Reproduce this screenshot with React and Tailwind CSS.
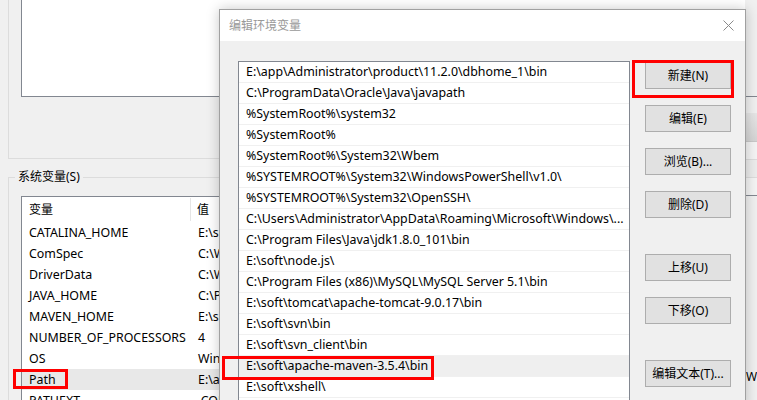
import React from "react";

const font = { fontFamily: '"Noto Sans", "Noto Sans CJK SC", sans-serif' };

const paths = [
  "E:\\app\\Administrator\\product\\11.2.0\\dbhome_1\\bin",
  "C:\\ProgramData\\Oracle\\Java\\javapath",
  "%SystemRoot%\\system32",
  "%SystemRoot%",
  "%SystemRoot%\\System32\\Wbem",
  "%SYSTEMROOT%\\System32\\WindowsPowerShell\\v1.0\\",
  "%SYSTEMROOT%\\System32\\OpenSSH\\",
  "C:\\Users\\Administrator\\AppData\\Roaming\\Microsoft\\Windows\\...",
  "C:\\Program Files\\Java\\jdk1.8.0_101\\bin",
  "E:\\soft\\node.js\\",
  "C:\\Program Files (x86)\\MySQL\\MySQL Server 5.1\\bin",
  "E:\\soft\\tomcat\\apache-tomcat-9.0.17\\bin",
  "E:\\soft\\svn\\bin",
  "E:\\soft\\svn_client\\bin",
  "E:\\soft\\apache-maven-3.5.4\\bin",
  "E:\\soft\\xshell\\",
];

const sysVars = [
  ["CATALINA_HOME", "E:\\soft\\tomcat"],
  ["ComSpec", "C:\\Windows\\system32\\cmd.exe"],
  ["DriverData", "C:\\Windows\\System32\\Drivers"],
  ["JAVA_HOME", "C:\\Program Files\\Java"],
  ["MAVEN_HOME", "E:\\soft\\apache-maven"],
  ["NUMBER_OF_PROCESSORS", "4"],
  ["OS", "Windows_NT"],
  ["Path", "E:\\app\\Administrator"],
  ["PATHEXT", ".COM;.EXE;.BAT"],
];

const Btn = ({ label, className = "" }) => (
  <div
    className={`w-[86px] h-[27px] shrink-0 flex items-center justify-center bg-[#e1e1e1] border border-[#adadad] text-[12px] leading-[16px] text-black ${className}`}
  >
    {label}
  </div>
);

export default function App() {
  return (
    <div
      className="relative w-[757px] h-[400px] overflow-hidden bg-[#f0f0f0] flex"
      style={font}
    >
      {/* background window */}
      <div className="w-[745px] shrink-0 flex flex-col">
        <div className="ml-2 h-[159px] shrink-0 border-l border-b border-[#dcdcdc] pl-3">
          <div className="h-[97px] bg-white border-l border-b border-[#828790]" />
        </div>
        <div className="relative mt-[18px] ml-2 flex-1 min-h-0 border-l border-t border-[#dcdcdc] pl-3 pt-[18px]">
          <span className="absolute left-[6px] top-[-10px] px-[3px] bg-[#f0f0f0] text-[12px] leading-[18px] text-black">
            系统变量(S)
          </span>
          <div className="h-full bg-white border-l border-t border-[#828790] overflow-hidden">
            <div className="h-[25px] flex items-center text-[12px] leading-[16px] text-black">
              <div className="w-[169px] pl-[7px] h-[23px] flex items-center border-r border-[#e5e5e5]">
                变量
              </div>
              <div className="pl-[6px]">值</div>
            </div>
            {sysVars.map(([k, v]) => (
              <div
                key={k}
                className={`h-[21px] shrink-0 flex items-center text-[12.4px] leading-[16px] text-black ${
                  k === "Path" ? "bg-[#e8e8e8]" : ""
                }`}
              >
                <div className="w-[169px] pl-[7px] whitespace-nowrap">{k}</div>
                <div className="pl-[7px] whitespace-nowrap">{v}</div>
              </div>
            ))}
          </div>
        </div>
      </div>

      {/* sliver of the window behind, right edge */}
      <div className="w-[12px] shrink-0 flex flex-col overflow-hidden">
        <div className="h-[96px] shrink-0" />
        <div className="h-[1px] shrink-0 bg-[#828790]" />
        <div className="h-[16px] shrink-0" />
        <div className="h-[28px] shrink-0 bg-gradient-to-b from-[#e6e6e6] to-[#d4d4d4]" />
        <div className="h-[1px] shrink-0 bg-[#c8c8c8]" />
        <div className="h-[17px] shrink-0 bg-[#f4f4f4]" />
        <div className="h-[1px] shrink-0 bg-[#dcdcdc]" />
        <div className="h-[17px] shrink-0 bg-[#ececec]" />
        <div className="h-[1px] shrink-0 bg-[#dcdcdc]" />
        <div className="h-[17px] shrink-0 bg-[#f4f4f4]" />
        <div className="h-[1px] shrink-0 bg-[#828790]" />
        <div className="flex-1 flex flex-col justify-end pb-[14px]">
          <span className="text-[12px] text-black leading-[18px] pl-[1px]">Wi</span>
        </div>
      </div>

      {/* edit env var dialog */}
      <div className="absolute left-[219px] top-[9px] w-[527px] h-[400px] border border-[#a0a0a0] bg-[#f0f0f0] shadow-[0_0_12px_rgba(0,0,0,0.22)] flex flex-col">
        <div className="h-[31px] shrink-0 bg-white flex items-center justify-between pl-[9px] pr-[10px]">
          <span className="text-[12px] leading-[16px] text-[#999999]">编辑环境变量</span>
          <svg width="11" height="11" viewBox="0 0 11 11" className="mr-[1px]">
            <path d="M0.5 0.5L10.5 10.5M10.5 0.5L0.5 10.5" stroke="#8a8a8a" strokeWidth="1" />
          </svg>
        </div>
        <div className="flex shrink-0 pl-[18px] pt-[20px]">
          <div className="w-[392px] h-[360px] shrink-0 bg-white border border-[#828790] overflow-hidden">
            {paths.map((p, i) => (
              <div
                key={i}
                className={`h-[21px] flex items-center pl-[7px] text-[12.4px] leading-[16px] text-black whitespace-nowrap border-b border-[#f0f0f0] ${
                  i === 14 ? "bg-[#efefef]" : ""
                }`}
              >
                {p}
              </div>
            ))}
          </div>
          <div className="ml-[15px] pt-[1px] flex flex-col gap-4">
            <Btn label="新建(N)" />
            <Btn label="编辑(E)" />
            <Btn label="浏览(B)..." />
            <Btn label="删除(D)" />
            <Btn label="上移(U)" className="mt-[20px]" />
            <Btn label="下移(O)" />
            <Btn label="编辑文本(T)..." className="mt-[20px]" />
          </div>
        </div>
      </div>

      {/* red annotation boxes */}
      <div className="absolute left-[632px] top-[60px] w-[102px] h-[38px] border-[3px] border-[#ff0000]" />
      <div className="absolute left-[222px] top-[356px] w-[212px] h-[24px] border-[3px] border-[#ff0000]" />
      <div className="absolute left-[13px] top-[369px] w-[55px] h-[20px] border-[3px] border-[#ff0000]" />
    </div>
  );
}
